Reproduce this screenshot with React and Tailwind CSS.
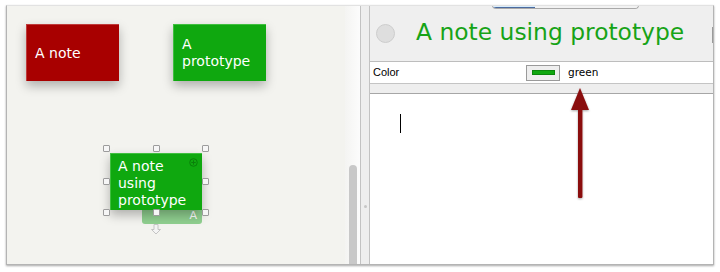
import React from "react";

// Petite poignée de sélection autour de la note active
const Handle = ({ x, y }) => (
  <div
    className="absolute w-[7px] h-[7px] bg-[#f6f6f6] border border-[#9c9c9c] rounded-[1px]"
    style={{ left: x, top: y }}
  />
);

// Note du canevas (rouge ou verte)
const Note = ({ x, y, w, h, color, border, children, className = "" }) => (
  <div
    className={`absolute flex flex-col overflow-hidden text-white text-[14px] leading-[17px] shadow-[0_5px_10px_rgba(0,0,0,0.28)] border-t border-l ${className}`}
    style={{ left: x, top: y, width: w, height: h, backgroundColor: color, borderColor: border, fontFamily: '"DejaVu Sans", sans-serif' }}
  >
    {children}
  </div>
);

const App = () => {
  return (
    <div className="w-[720px] h-[272px] bg-white relative pl-[6px] pt-[5px]">
      <div className="w-[708px] h-[260px] border border-[#b4b4b4] border-t-[#e2e2e2] shadow-[0_1px_2px_rgba(0,0,0,0.35)] flex overflow-hidden">
        {/* CANEVAS */}
        <div className="w-[338px] h-full bg-[#f3f3ef] relative">
          <Note x={19} y={18} w={93} h={57} color="#a80000" border="#bf3a3a" className="pl-[8px] justify-center">
            <span>A note</span>
          </Note>
          <Note x={166} y={18} w={93} h={57} color="#0fa80f" border="#3fbf3f" className="pl-[8px] justify-center">
            <span>A</span>
            <span>prototype</span>
          </Note>

          {/* étiquette du prototype */}
          <div className="absolute left-[135px] top-[203px] w-[60px] h-[15px] bg-[#8fcf8f] rounded-b-[3px] flex items-center justify-end pr-[5px] text-white text-[11px]" style={{ fontFamily: '"DejaVu Sans", sans-serif' }}>
            A
          </div>

          <Note x={103} y={147} w={92} h={57} color="#0fa80f" border="#3fbf3f" className="pl-[7px] pt-[4px] justify-start">
            <span>A note</span>
            <span>using</span>
            <span>prototype</span>
          </Note>

          {/* petit bouton + */}
          <svg className="absolute left-[182px] top-[152px]" width="9" height="9" viewBox="0 0 9 9">
            <circle cx="4.5" cy="4.5" r="3.8" fill="none" stroke="#0a7f0a" strokeWidth="1" />
            <path d="M4.5 2.3v4.4M2.3 4.5h4.4" stroke="#0a7f0a" strokeWidth="1" />
          </svg>

          {[96, 146, 195].map((x) => (
            <Handle key={`t${x}`} x={x} y={139} />
          ))}
          <Handle x={96} y={172} />
          <Handle x={195} y={172} />
          {[96, 146, 195].map((x) => (
            <Handle key={`b${x}`} x={x} y={203} />
          ))}

          {/* flèche vers le bas */}
          <svg className="absolute left-[144px] top-[218px]" width="10" height="11" viewBox="0 0 10 11">
            <path d="M3 0.5h4v5h2.5L5 10 0.5 5.5H3z" fill="#f4f4f4" stroke="#c4c4c4" strokeWidth="1" />
          </svg>
        </div>

        {/* BARRE DE DÉFILEMENT */}
        <div className="w-[15px] h-full bg-gradient-to-r from-[#f4f4f2] to-[#fcfcfc] flex flex-col items-center pt-[159px]">
          <div className="w-[8px] flex-1 bg-[#c8c8c8] rounded-t-full" />
        </div>

        {/* SÉPARATEUR */}
        <div className="w-[10px] h-full border-l border-r border-[#c2c2c2] bg-[#eeeeee] flex flex-col items-center pt-[199px]">
          <div className="w-[3px] h-[3px] rounded-full bg-[#c6c6c6]" />
        </div>

        {/* INSPECTEUR */}
        <div className="flex-1 h-full flex flex-col relative bg-white">
          <div className="h-[55px] bg-[#efefef] flex items-center pl-[6px] relative">
            <div className="absolute left-[122px] top-[-5px] w-[147px] h-[8px] flex rounded-b-[4px] overflow-hidden border border-[#a9a9a9] border-t-0">
              <div className="w-[42px] bg-[#d9edfb] border-b border-[#4b6ba0]" />
              <div className="flex-1 bg-[#f2f2f2]" />
            </div>
            <div className="w-[19px] h-[19px] rounded-full bg-[#dedede] border border-[#cdcdcd]" />
            <span className="ml-[21px] -mt-[3px] text-[23.4px] leading-[28px] text-[#17a317]" style={{ fontFamily: '"DejaVu Sans", sans-serif' }}>
              A note using prototype
            </span>
            <div className="absolute right-0 top-[21px] w-[1px] h-[16px] bg-[#9a9a9a]" />
          </div>

          <div className="h-[22px] border-t border-[#bdbdbd] flex items-center pl-[3px] text-[11px] text-black">
            <span className="w-[153px]" style={{ fontFamily: '"Liberation Sans", sans-serif' }}>Color</span>
            <div className="w-[34px] h-[16px] border border-[#9a9a9a] bg-[#eeeeee] flex items-center justify-center">
              <div className="w-[23px] h-[5px] bg-[#10a810] border border-[#0b860b]" />
            </div>
            <span className="ml-[8px] text-[10.5px]" style={{ fontFamily: '"DejaVu Sans", sans-serif' }}>green</span>
          </div>

          <div className="h-[11px] border-t border-b border-t-[#c4c4c4] border-b-[#a6a6a6] bg-[#eeeeee]" />

          <div className="flex-1 pl-[30px] pt-[20px]">
            <div className="w-[1px] h-[19px] bg-black" />
          </div>

          {/* Flèche d'annotation */}
          <svg className="absolute left-[198px] top-[80px]" width="24" height="116" viewBox="0 0 24 116">
            <defs>
              <filter id="sh" x="-50%" y="-10%" width="200%" height="130%">
                <feDropShadow dx="0" dy="1" stdDeviation="1" floodColor="#000" floodOpacity="0.35" />
              </filter>
            </defs>
            <g filter="url(#sh)">
              <path d="M12 2 L21 24 L3 24 Z" fill="#8a0a0a" />
              <rect x="10" y="23" width="4.4" height="89" rx="1" fill="#8a0a0a" />
            </g>
          </svg>
        </div>
      </div>
    </div>
  );
};

export default App;
